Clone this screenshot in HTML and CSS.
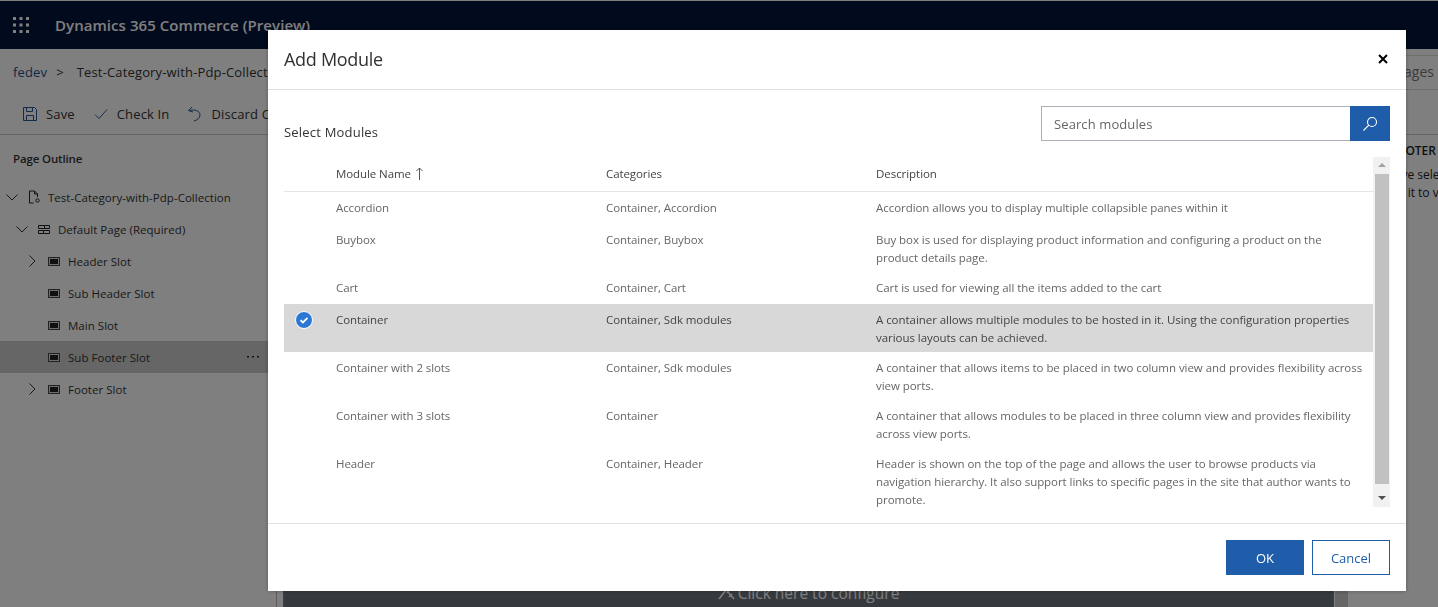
FILE: index.html
```html
<!DOCTYPE html>
<html lang="en">
<head>
    <meta charset="UTF-8">
    <meta name="viewport" content="width=device-width, initial-scale=1.0">
    <title>Add Module</title>
    <link rel="stylesheet" href="styles.css">
</head>
<body>
    <div class="app">
        <header class="topbar">
            <svg class="waffle" width="16" height="16" viewBox="0 0 16 16"><g fill="#fff"><rect x="0" y="0" width="3" height="3"/><rect x="6.5" y="0" width="3" height="3"/><rect x="13" y="0" width="3" height="3"/><rect x="0" y="6.5" width="3" height="3"/><rect x="6.5" y="6.5" width="3" height="3"/><rect x="13" y="6.5" width="3" height="3"/><rect x="0" y="13" width="3" height="3"/><rect x="6.5" y="13" width="3" height="3"/><rect x="13" y="13" width="3" height="3"/></g></svg>
            <span class="product">Dynamics 365 Commerce (Preview)</span>
        </header>
        <div class="crumbs">
            <span class="crumb-link">fedev</span>
            <span class="crumb-sep">&gt;</span>
            <span class="crumb-page">Test-Category-with-Pdp-Collection</span>
            <span class="crumb-right">Pages</span>
        </div>
        <div class="commands">
            <span class="command">
                <svg width="16" height="16" viewBox="0 0 16 16" fill="none" stroke="#2b5797"><path d="M1.5 1.5h11l2 2v11h-13z"/><path d="M4.5 1.5v4h6v-4M4.5 14.5v-5h7v5"/></svg>
                Save
            </span>
            <span class="command">
                <svg width="16" height="16" viewBox="0 0 16 16" fill="none" stroke="#2b5797"><path d="M2 8.500l4 4 8-9"/></svg>
                Check In
            </span>
            <span class="command">
                <svg width="16" height="16" viewBox="0 0 16 16" fill="none" stroke="#2b5797"><path d="M5 1L1.500 4.500 6 6"/><path d="M2 4.500c6-1.500 11 .5 11 4.500 0 3-2.500 5-6 6"/></svg>
                Discard Changes
            </span>
        </div>
        <div class="workspace">
            <aside class="outline">
                <h2 class="outline-title">Page Outline</h2>
                <div class="tree-row level-0">
                    <svg class="chev" width="12" height="12" viewBox="0 0 12 12"><path d="M.5 3.500l5.500 5.500 5.500-5.500" fill="none" stroke="#333"/></svg>
                    <svg class="node" width="12" height="14" viewBox="0 0 12 14" fill="none" stroke="#222"><path d="M1.500 13V1h5l3 3v3M6.500 1v3h3M1.500 13h4"/><circle cx="9.500" cy="10.500" r="1.700"/></svg>
                    Test-Category-with-Pdp-Collection
                </div>
                <div class="tree-row level-1">
                    <svg class="chev" width="12" height="12" viewBox="0 0 12 12"><path d="M.5 3.500l5.500 5.500 5.500-5.500" fill="none" stroke="#333"/></svg>
                    <svg class="node" width="12" height="9" viewBox="0 0 12 9" fill="none" stroke="#222"><path d="M.5.500h6v3h-6zM6.500.500h5v3h-5zM.5 5.500h5v3h-5zM5.500 5.500h6v3h-6z"/></svg>
                    Default Page (Required)
                </div>
                <div class="tree-row level-2">
                    <svg class="chev" width="12" height="12" viewBox="0 0 12 12"><path d="M3.500.5l5.500 5.500-5.500 5.500" fill="none" stroke="#333"/></svg>
                    <span class="slot"></span>
                    Header Slot
                </div>
                <div class="tree-row level-2">
                    <span class="chev"></span>
                    <span class="slot"></span>
                    Sub Header Slot
                </div>
                <div class="tree-row level-2">
                    <span class="chev"></span>
                    <span class="slot"></span>
                    Main Slot
                </div>
                <div class="tree-row level-2 is-active">
                    <span class="chev"></span>
                    <span class="slot"></span>
                    Sub Footer Slot
                    <svg class="more" width="12" height="2" viewBox="0 0 12 2"><g fill="#222"><rect x="0" y="0" width="2" height="1.500"/><rect x="5" y="0" width="2" height="1.500"/><rect x="10" y="0" width="2" height="1.500"/></g></svg>
                </div>
                <div class="tree-row level-2">
                    <svg class="chev" width="12" height="12" viewBox="0 0 12 12"><path d="M3.500.5l5.500 5.500-5.500 5.500" fill="none" stroke="#333"/></svg>
                    <span class="slot"></span>
                    Footer Slot
                </div>
            </aside>
            <main class="canvas">
                <div class="configure">
                    <svg class="configure-icon" width="17" height="14" viewBox="0 0 17 14" fill="none" stroke="#fff" stroke-width="1.600"><path d="M1 13L8 4M6 5l3-3 2 2-2 3"/><path d="M16 13L10 6M11 11l3-3"/></svg>
                    Click here to configure
                </div>
                <div class="canvas-scroll"></div>
            </main>
            <aside class="props">
                <h3 class="props-title">SUB FOOTER</h3>
                <p class="props-text">You have selected</p>
                <p class="props-text">click on it to view</p>
            </aside>
        </div>
    </div>

    <div class="overlay"></div>

    <div class="modal">
        <div class="modal-head">
            <h1 class="modal-title">Add Module</h1>
            <svg class="close" width="10" height="10" viewBox="0 0 10 10"><path d="M1 1l8 8M9 1l-8 8" stroke="#000" stroke-width="2"/></svg>
        </div>
        <div class="modal-tools">
            <span class="select-label">Select Modules</span>
            <div class="search">
                <span class="search-box">Search modules</span>
                <span class="search-btn">
                    <svg width="16" height="16" viewBox="0 0 16 16" fill="none" stroke="#fff" stroke-width="1.100"><circle cx="10" cy="6" r="4.500"/><path d="M6.800 9.200L1.500 14.500"/></svg>
                </span>
            </div>
        </div>
        <div class="table-wrap">
            <div class="table">
                <div class="row row-head">
                    <div class="cell-check"></div>
                    <div class="cell-name">Module Name <svg class="sort" width="7" height="13" viewBox="0 0 7 13" fill="none" stroke="#555"><path d="M3.500 13V1M.5 4l3-3 3 3"/></svg></div>
                    <div class="cell-cat">Categories</div>
                    <div class="cell-desc">Description</div>
                </div>
                <div class="row">
                    <div class="cell-check"></div>
                    <div class="cell-name">Accordion</div>
                    <div class="cell-cat">Container, Accordion</div>
                    <div class="cell-desc">Accordion allows you to display multiple collapsible panes within it</div>
                </div>
                <div class="row">
                    <div class="cell-check"></div>
                    <div class="cell-name">Buybox</div>
                    <div class="cell-cat">Container, Buybox</div>
                    <div class="cell-desc">Buy box is used for displaying product information and configuring a product on the product details page.</div>
                </div>
                <div class="row">
                    <div class="cell-check"></div>
                    <div class="cell-name">Cart</div>
                    <div class="cell-cat">Container, Cart</div>
                    <div class="cell-desc">Cart is used for viewing all the items added to the cart</div>
                </div>
                <div class="row is-selected">
                    <div class="cell-check">
                        <svg width="18" height="18" viewBox="0 0 18 18"><circle cx="9" cy="9" r="8.500" fill="#2b78d4" stroke="#fff"/><path d="M5.500 9.200l2.400 2.300 4.600-4.600" fill="none" stroke="#fff" stroke-width="1.800"/></svg>
                    </div>
                    <div class="cell-name">Container</div>
                    <div class="cell-cat">Container, Sdk modules</div>
                    <div class="cell-desc">A container allows multiple modules to be hosted in it. Using the configuration properties various layouts can be achieved.</div>
                </div>
                <div class="row">
                    <div class="cell-check"></div>
                    <div class="cell-name">Container with 2 slots</div>
                    <div class="cell-cat">Container, Sdk modules</div>
                    <div class="cell-desc">A container that allows items to be placed in two column view and provides flexibility across view ports.</div>
                </div>
                <div class="row">
                    <div class="cell-check"></div>
                    <div class="cell-name">Container with 3 slots</div>
                    <div class="cell-cat">Container</div>
                    <div class="cell-desc">A container that allows modules to be placed in three column view and provides flexibility across view ports.</div>
                </div>
                <div class="row">
                    <div class="cell-check"></div>
                    <div class="cell-name">Header</div>
                    <div class="cell-cat">Container, Header</div>
                    <div class="cell-desc">Header is shown on the top of the page and allows the user to browse products via navigation hierarchy. It also support links to specific pages in the site that author wants to promote.</div>
                </div>
            </div>
            <div class="scrollbar">
                <span class="arrow-up"></span>
                <span class="thumb"></span>
                <span class="arrow-down"></span>
            </div>
        </div>
        <div class="modal-foot">
            <button class="btn btn-primary" type="button">OK</button>
            <button class="btn btn-outline" type="button">Cancel</button>
        </div>
    </div>
</body>
</html>
```

FILE: styles.css
```css
* { box-sizing: border-box; }
html, body { margin: 0; height: 100%; overflow: hidden; }
body { font-family: "Open Sans", "Noto Sans", sans-serif; font-size: 12px; color: #333; background: #fff; }

.app { height: 607px; display: flex; flex-direction: column; }

.topbar { height: 48px; flex: none; margin-top: 1px; background: #04143c; display: flex; align-items: center; padding-left: 13px; color: #fff; }
.waffle { margin-right: 26px; }
.product { font-size: 15px; font-weight: 600; letter-spacing: 0.06px; }

.crumbs { height: 46px; flex: none; display: flex; align-items: center; padding-left: 13px; font-size: 13px; letter-spacing: 0.15px; }
.crumb-link { color: #1f4f8f; }
.crumb-sep { margin: 0 13px 0 9px; }
.crumb-right { margin-left: auto; height: 35px; width: 60px; padding-right: 4px; text-align: right; line-height: 32px; font-size: 14px; letter-spacing: 0; color: #777; border-top: 1px solid #ddd; border-bottom: 1px solid #ddd; }

.commands { height: 40px; flex: none; display: flex; align-items: center; padding: 0 0 2px 22px; gap: 18px; font-size: 13px; letter-spacing: 0.15px; border-bottom: 1px solid #ccc; }
.command { display: flex; align-items: center; gap: 8px; }

.workspace { flex: 1; display: flex; min-height: 0; }

.outline { width: 277px; flex: none; padding-top: 15px; border-right: 1px solid #bbb; }
.outline-title { margin: 0 0 13px 13px; font-size: 11.500px; font-weight: 600; line-height: 18px; letter-spacing: -0.15px; }
.tree-row { height: 32px; display: flex; align-items: center; font-size: 11.500px; letter-spacing: 0.03px; }
.level-0 { padding-left: 6px; }
.level-1 { padding-left: 16px; }
.level-2 { padding-left: 26px; }
.is-active { background: #ccc; }
.chev { width: 12px; height: 12px; flex: none; margin-right: 10px; }
.node { margin-right: 8px; flex: none; }
.slot { width: 12px; height: 9px; flex: none; margin-right: 8px; background: #222; border: 1px solid #444; box-shadow: inset 0 0 0 1px #ddd; }
.more { margin-left: auto; margin-right: 17px; }

.canvas { flex: 1; min-width: 0; padding-left: 6px; padding-right: 9px; display: flex; gap: 1px; justify-content: flex-end; align-items: flex-end; }
.configure { flex: 1; height: 40px; padding-bottom: 4px; display: flex; align-items: flex-end; justify-content: center; gap: 3px; background: #6c747c; border-left: 1px solid #5f9e3a; border-right: 1px solid #5f9e3a; color: #fff; font-size: 15.500px; line-height: 20px; }
.configure-icon { margin-bottom: 3px; }
.canvas-scroll { width: 13px; height: 40px; flex: none; background: #ccc; }

.props { width: 81px; flex: none; padding: 7px 0 0 6px; overflow: hidden; font-size: 12px; line-height: 18px; color: #222; }
.props-title { margin: 0 0 6px; font-size: 12px; font-weight: 600; white-space: nowrap; }
.props-text { margin: 0; white-space: nowrap; }

.overlay { position: fixed; inset: 0; background: rgba(0, 0, 0, 0.5); }

.modal { position: fixed; left: 268px; top: 30px; width: 1138px; height: 561px; background: #fff; display: flex; flex-direction: column; box-shadow: 0 0 4px rgba(0, 0, 0, 0.3); }
.modal-head { height: 60px; flex: none; display: flex; align-items: center; justify-content: space-between; padding: 0 18px 2px 16px; border-bottom: 1px solid #e1e1e1; }
.modal-title { margin: 0; font-size: 18px; font-weight: 400; color: #323130; letter-spacing: -0.3px; }

.modal-tools { height: 67px; flex: none; display: flex; justify-content: space-between; align-items: flex-start; padding: 16px 16px 0; }
.select-label { margin-top: 17px; font-size: 13px; letter-spacing: 0.2px; }
.search { display: flex; width: 349px; height: 35px; }
.search-box { flex: 1; border: 1px solid #aab0b8; border-right: 0; padding-left: 12px; line-height: 34px; font-size: 13px; letter-spacing: 0.1px; color: #666; }
.search-btn { width: 40px; background: #1f5dab; display: flex; align-items: center; justify-content: center; }

.table-wrap { flex: 1; display: flex; margin: 0 16px; min-height: 0; }
.table { flex: 1; min-width: 0; font-size: 11.500px; line-height: 18px; color: #666; letter-spacing: -0.09px; }
.row { display: flex; min-height: 32px; padding: 7px 0 5px; }
.row-head { height: 35px; padding: 8px 0 0; color: #444; border-bottom: 1px solid #e6e6e6; }
.cell-check { width: 52px; flex: none; padding-left: 11px; }
.cell-check svg { display: block; }
.cell-name { width: 270px; flex: none; }
.cell-cat { width: 270px; flex: none; }
.cell-desc { flex: 1; min-width: 0; padding-right: 8px; letter-spacing: -0.05px; }
.sort { margin-left: 2px; vertical-align: -2px; }
.is-selected { background: #d8d8d8; color: #444; }

.scrollbar { width: 17px; height: 350px; flex: none; background: #f1f1f1; display: flex; flex-direction: column; align-items: center; }
.thumb { width: 14px; height: 310px; flex: none; background: #c1c1c1; }
.arrow-up { height: 0; margin: 6px 0 7px; border-left: 4px solid transparent; border-right: 4px solid transparent; border-bottom: 4px solid #a3a3a3; }
.arrow-down { height: 0; margin-top: 12px; border-left: 4px solid transparent; border-right: 4px solid transparent; border-top: 4px solid #505050; }

.modal-foot { height: 68px; flex: none; display: flex; justify-content: flex-end; gap: 8px; padding: 16px; border-top: 1px solid #e1e1e1; }
.btn { width: 78px; height: 35px; font-family: inherit; font-size: 13px; border: 1px solid #1f5dab; padding: 0; }
.btn-primary { background: #1f5dab; color: #fff; }
.btn-outline { background: #fff; color: #1f5dab; }
```
